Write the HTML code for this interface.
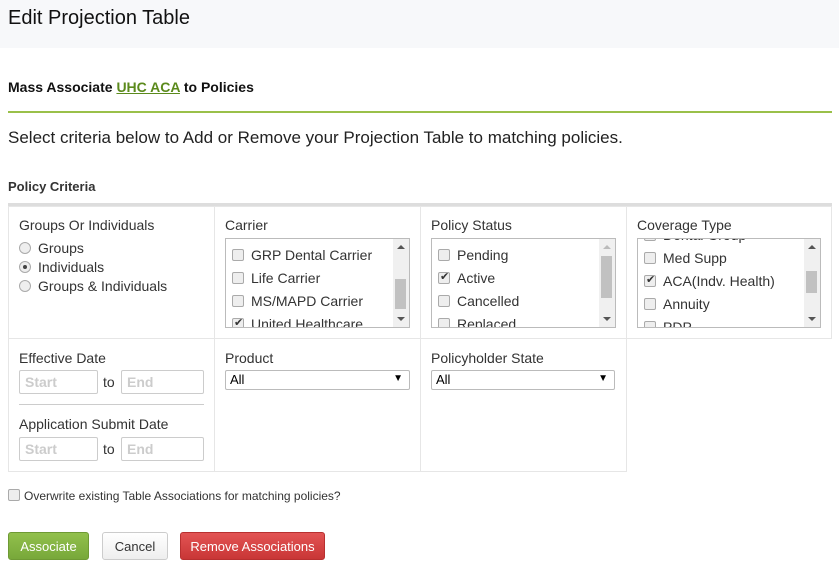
<!DOCTYPE html>
<html><head><style>
*{box-sizing:border-box;margin:0;padding:0}
body{width:839px;height:569px;background:#fff;font-family:"Liberation Sans",sans-serif;color:#222;position:relative;overflow:hidden}
.a{position:absolute}
.hdr{left:0;top:0;width:839px;height:48px;background:#f7f8fa}
.cell{position:absolute;border:1px solid #e6e6e6}
.lbl{font-size:14px;color:#333}
.sel{position:absolute;border:1px solid #bbb;background:#fff;overflow:hidden}
.sb{position:absolute;right:0;top:0;width:16px;height:100%;background:#f0f0f0}
.thumb{position:absolute;right:3px;width:11px;background:#c1c1c1}
.up,.dn{position:absolute;left:4px;width:0;height:0;border-left:4px solid transparent;border-right:4px solid transparent}
.up{top:6px;border-bottom:4px solid #555}
.dn{bottom:6px;border-top:4px solid #555}
.it{position:absolute;left:6px;font-size:14px;color:#333;white-space:nowrap}
.cb{display:inline-block;position:relative;width:12px;height:12px;border:1px solid #aaa;border-radius:2px;background:#eee;vertical-align:-1px;margin-right:7px}
.cb i{position:absolute;left:1px;top:-3px;font-style:normal;font-size:11px;line-height:14px;color:#333}
.rd{display:inline-block;width:12px;height:12px;border:1px solid #aaa;border-radius:50%;background:#eee;vertical-align:-1px;margin-right:7px;position:relative}
.inp{position:absolute;height:24px;border:1px solid #ccc;border-radius:2px;font-size:14px;font-weight:bold;color:#ccc;padding:3px 5px}
.dd{position:absolute;height:20px;border:1px solid #bbb;border-radius:2px;font-size:13px;padding:1px 4px;color:#000}
.btn{position:absolute;height:28px;border-radius:3px;font-size:13px;text-align:center;line-height:27px}
</style></head><body>
<div class="a hdr"></div>
<div class="a" style="left:8px;top:7px;font-size:20px;color:#111">Edit Projection Table</div>
<div class="a" style="left:8px;top:79px;font-size:14px;font-weight:bold;color:#111">Mass Associate <span style="color:#5b8a1c;text-decoration:underline">UHC ACA</span> to Policies</div>
<div class="a" style="left:8px;top:111px;width:824px;height:2px;background:#9ac04a"></div>
<div class="a" style="left:8px;top:128px;font-size:17px;color:#222">Select criteria below to Add or Remove your Projection Table to matching policies.</div>
<div class="a" style="left:8px;top:179px;font-size:13px;font-weight:bold;color:#333">Policy Criteria</div>
<div class="a" style="left:8px;top:203px;width:824px;height:3px;background:#ddd"></div>

<div class="cell" style="left:8px;top:206px;width:207px;height:133px"></div>
<div class="cell" style="left:214px;top:206px;width:207px;height:133px"></div>
<div class="cell" style="left:420px;top:206px;width:207px;height:133px"></div>
<div class="cell" style="left:626px;top:206px;width:206px;height:133px"></div>
<div class="cell" style="left:8px;top:338px;width:207px;height:134px"></div>
<div class="cell" style="left:214px;top:338px;width:207px;height:134px"></div>
<div class="cell" style="left:420px;top:338px;width:207px;height:134px"></div>

<div class="a lbl" style="left:19px;top:217px">Groups Or Individuals</div>
<div class="a lbl" style="left:19px;top:240px"><span class="rd"></span>Groups</div>
<div class="a lbl" style="left:19px;top:259px"><span class="rd"><span style="position:absolute;left:3px;top:3px;width:4px;height:4px;border-radius:50%;background:#444"></span></span>Individuals</div>
<div class="a lbl" style="left:19px;top:278px"><span class="rd"></span>Groups &amp; Individuals</div>

<div class="a lbl" style="left:225px;top:217px">Carrier</div>
<div class="sel" style="left:225px;top:238px;width:185px;height:90px">
<div class="it" style="top:8px"><span class="cb"></span>GRP Dental Carrier</div>
<div class="it" style="top:31px"><span class="cb"></span>Life Carrier</div>
<div class="it" style="top:54px"><span class="cb"></span>MS/MAPD Carrier</div>
<div class="it" style="top:77px"><span class="cb"><i>✔</i></span>United Healthcare</div>
<div class="sb"><div class="up"></div><div class="thumb" style="top:40px;height:30px"></div><div class="dn"></div></div>
</div>

<div class="a lbl" style="left:431px;top:217px">Policy Status</div>
<div class="sel" style="left:431px;top:238px;width:185px;height:90px">
<div class="it" style="top:8px"><span class="cb"></span>Pending</div>
<div class="it" style="top:31px"><span class="cb"><i>✔</i></span>Active</div>
<div class="it" style="top:54px"><span class="cb"></span>Cancelled</div>
<div class="it" style="top:77px"><span class="cb"></span>Replaced</div>
<div class="sb"><div class="up" style="border-bottom-color:#bbb"></div><div class="thumb" style="top:17px;height:42px"></div><div class="dn"></div></div>
</div>

<div class="a lbl" style="left:637px;top:217px">Coverage Type</div>
<div class="sel" style="left:637px;top:238px;width:184px;height:90px">
<div class="it" style="top:-12px"><span class="cb"></span>Dental Group</div>
<div class="it" style="top:11px"><span class="cb"></span>Med Supp</div>
<div class="it" style="top:34px"><span class="cb"><i>✔</i></span>ACA(Indv. Health)</div>
<div class="it" style="top:57px"><span class="cb"></span>Annuity</div>
<div class="it" style="top:80px"><span class="cb"></span>PDP</div>
<div class="sb"><div class="up"></div><div class="thumb" style="top:32px;height:22px"></div><div class="dn"></div></div>
</div>

<div class="a lbl" style="left:19px;top:350px">Effective Date</div>
<div class="inp" style="left:19px;top:370px;width:79px">Start</div>
<div class="a lbl" style="left:103px;top:374px">to</div>
<div class="inp" style="left:121px;top:370px;width:83px">End</div>
<div class="a" style="left:19px;top:404px;width:185px;height:1px;background:#ccc"></div>
<div class="a lbl" style="left:19px;top:416px">Application Submit Date</div>
<div class="inp" style="left:19px;top:437px;width:79px">Start</div>
<div class="a lbl" style="left:103px;top:441px">to</div>
<div class="inp" style="left:121px;top:437px;width:83px">End</div>

<div class="a lbl" style="left:225px;top:350px">Product</div>
<div class="dd" style="left:225px;top:370px;width:185px">All<span style="position:absolute;right:6px;top:2px;font-size:10px">▼</span></div>
<div class="a lbl" style="left:431px;top:350px">Policyholder State</div>
<div class="dd" style="left:431px;top:370px;width:184px">All<span style="position:absolute;right:6px;top:2px;font-size:10px">▼</span></div>

<div class="a" style="left:8px;top:489px;font-size:12px;color:#333"><span class="cb" style="margin-right:4px"></span>Overwrite existing Table Associations for matching policies?</div>

<div class="btn" style="left:8px;top:532px;width:81px;background:linear-gradient(#92c04c,#78a83a);border:1px solid #6e9a34;color:#fff">Associate</div>
<div class="btn" style="left:102px;top:532px;width:66px;background:linear-gradient(#fff,#eee);border:1px solid #ccc;color:#333">Cancel</div>
<div class="btn" style="left:180px;top:532px;width:145px;background:linear-gradient(#e25454,#c93636);border:1px solid #b83030;color:#fff">Remove Associations</div>
</body></html>
